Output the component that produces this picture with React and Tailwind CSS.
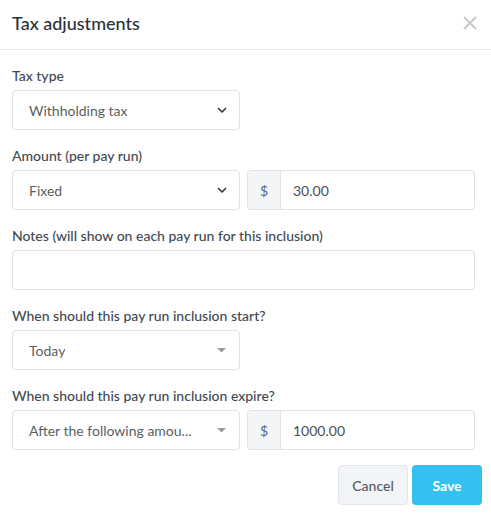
import React from "react";

const Chevron = () => (
  <svg width="10" height="7" viewBox="0 0 10 7" className="shrink-0">
    <path d="M1.5 1.5 L5 5 L8.5 1.5" fill="none" stroke="#3a3a3a" strokeWidth="1.7" strokeLinecap="round" strokeLinejoin="round" />
  </svg>
);

const Caret = () => (
  <svg width="9" height="5" viewBox="0 0 9 5" className="shrink-0">
    <path d="M0 0 L9 0 L4.5 4.5 Z" fill="#9a9a9a" />
  </svg>
);

function Label({ children }) {
  return <div className="h-[18px] leading-[18px] text-[14px] font-medium text-[#3f4a52] mb-[5px]">{children}</div>;
}

function Select({ value, caret }) {
  return (
    <div className="w-[228px] h-[40px] border border-[#dfe3e7] rounded-[4px] bg-white flex items-center pl-[16px] pr-[12px] justify-between">
      <span className="text-[14px] text-[#5a5f64] truncate">{value}</span>
      {caret ? <span className="pr-[1px]"><Caret /></span> : <Chevron />}
    </div>
  );
}

function Money({ value }) {
  return (
    <div className="flex-1 h-[40px] border border-[#dfe3e7] rounded-[4px] bg-white flex overflow-hidden">
      <div className="w-[33px] bg-[#f4f5f7] border-r border-[#dfe3e7] flex items-center justify-center text-[14px] text-[#53698a]">$</div>
      <div className="flex items-center pl-[12px] text-[14px] text-[#4a4f55]">{value}</div>
    </div>
  );
}

export default function App() {
  return (
    <div className="w-[491px] h-[514px] bg-white overflow-hidden" style={{ fontFamily: "Lato, 'Open Sans', sans-serif" }}>
      <div className="h-[50px] border-b border-[#e6ecee] flex items-center justify-between pl-[12px] pr-[14px]">
        <div className="text-[18px] text-[#28323a] font-medium mb-[2px]">Tax adjustments</div>
        <svg width="14" height="14" viewBox="0 0 14 14" className="mb-[4px]">
          <path d="M1 1 L13 13 M13 1 L1 13" stroke="#c8c8c8" strokeWidth="2" />
        </svg>
      </div>
      <div className="pt-[17px] pl-[12px] pr-[16px]">
        <Label>Tax type</Label>
        <Select value="Withholding tax" />
        <div className="h-[17px]" />
        <Label>Amount (per pay run)</Label>
        <div className="flex gap-[7px]">
          <Select value="Fixed" />
          <Money value="30.00" />
        </div>
        <div className="h-[17px]" />
        <Label>Notes (will show on each pay run for this inclusion)</Label>
        <div className="h-[40px] border border-[#dfe3e7] rounded-[4px] bg-white" />
        <div className="h-[17px]" />
        <Label>When should this pay run inclusion start?</Label>
        <Select value="Today" caret />
        <div className="h-[17px]" />
        <Label>When should this pay run inclusion expire?</Label>
        <div className="flex gap-[7px]">
          <Select value="After the following amou..." caret />
          <Money value="1000.00" />
        </div>
        <div className="flex justify-end gap-[4px] mt-[15px] mr-[-7px]">
          <button className="w-[70px] h-[40px] rounded-[4px] bg-[#f3f4f6] border border-[#e3e6ea] text-[14px] font-medium text-[#555b62]">Cancel</button>
          <button className="w-[70px] h-[40px] rounded-[4px] bg-[#35c1ef] text-[14px] font-bold text-white">Save</button>
        </div>
      </div>
    </div>
  );
}
